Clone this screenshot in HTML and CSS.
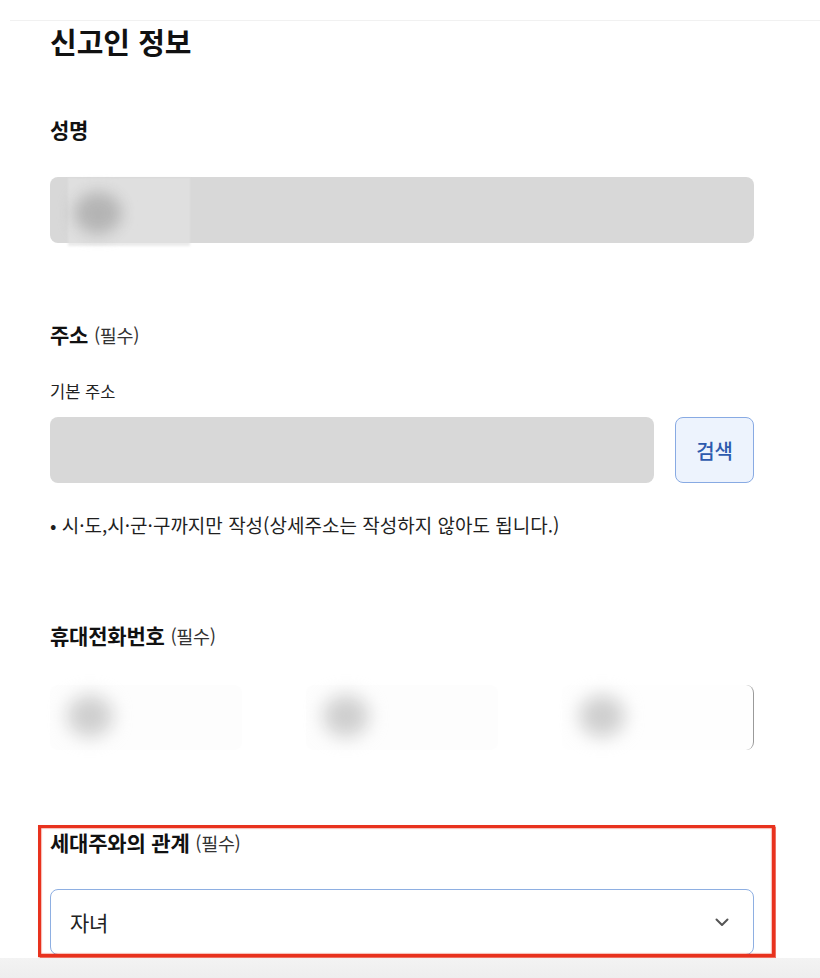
FILE: index.html
```html
<!DOCTYPE html>
<html lang="ko">
<head>
<meta charset="utf-8">
<title>신고인 정보</title>
<link rel="stylesheet" href="styles.css">
</head>
<body>
<div class="topbar"></div>
<main class="form">
  <h1 class="title">신고인 정보</h1>

  <section class="field field-name">
    <div class="label">성명</div>
    <div class="input input-gray input-name">
      <div class="mask"><div class="blob"></div></div>
    </div>
  </section>

  <section class="field field-addr">
    <div class="label">주소 <span class="req">(필수)</span></div>
    <div class="sublabel">기본 주소</div>
    <div class="addr-row">
      <div class="input input-gray addr-input"></div>
      <button class="search-btn" type="button">검색</button>
    </div>
    <p class="note">• 시·도,시·군·구까지만 작성(상세주소는 작성하지 않아도 됩니다.)</p>
  </section>

  <section class="field field-phone">
    <div class="label">휴대전화번호 <span class="req">(필수)</span></div>
    <div class="phone-row">
      <div class="phone-cell"><div class="blob blob-light"></div></div>
      <div class="phone-cell"><div class="blob blob-light"></div></div>
      <div class="phone-cell phone-last"><div class="blob blob-light"></div></div>
    </div>
  </section>

  <section class="field field-rel">
    <div class="label">세대주와의 관계 <span class="req">(필수)</span></div>
    <div class="select">
      <span class="select-value">자녀</span>
      <svg class="chevron" width="14" height="9" viewBox="0 0 14 9" aria-hidden="true">
        <path d="M1.5 1.5 L7 7 L12.5 1.5" fill="none" stroke="#555" stroke-width="2" stroke-linecap="round" stroke-linejoin="round"/>
      </svg>
    </div>
    <div class="highlight"></div>
  </section>
</main>
<div class="bottom-band"></div>
</body>
</html>
```

FILE: styles.css
```css
* { box-sizing: border-box; }

html, body {
  margin: 0;
  padding: 0;
  background: #ffffff;
}

body {
  font-family: "Noto Sans CJK KR", "Noto Sans", sans-serif;
  color: #1a1a1a;
  width: 820px;
  height: 978px;
  overflow: hidden;
}

.topbar {
  height: 21px;
  margin-left: 10px;
  border-bottom: 1px solid #f1f1f1;
}

.form {
  width: 704px;
  margin-left: 50px;
}

.title {
  margin: 0;
  font-size: 29px;
  line-height: 40px;
  font-weight: 700;
  color: #111;
  letter-spacing: 0;
}

.label {
  font-size: 21px;
  line-height: 28px;
  font-weight: 700;
  color: #111;
  letter-spacing: -0.2px;
}

.req {
  font-size: 18.5px;
  font-weight: 400;
  color: #333;
  letter-spacing: -0.3px;
}

.field-name { margin-top: 54px; }
.field-name .input { margin-top: 34px; }

.input {
  height: 66px;
  border-radius: 8px;
}

.input-gray {
  background: #d8d8d8;
}

.input-name {
  position: relative;
}

.input-name .mask {
  position: absolute;
  left: 18px;
  top: 1px;
  width: 122px;
  height: 68px;
  background: rgba(226, 226, 226, 0.7);
  filter: blur(1px);
}

.blob {
  position: absolute;
  left: 6px;
  top: 14px;
  width: 48px;
  height: 42px;
  border-radius: 50%;
  background: #b4b4b4;
  filter: blur(8px);
}

.field-addr { margin-top: 77px; }

.sublabel {
  margin-top: 31px;
  font-size: 16.5px;
  line-height: 22px;
  color: #222;
  letter-spacing: 0;
}

.addr-row {
  margin-top: 15px;
  display: flex;
  gap: 21px;
}

.addr-input {
  flex: 1;
}

.search-btn {
  width: 79px;
  height: 66px;
  border: 1px solid #88aae3;
  border-radius: 8px;
  background: #edf3fd;
  color: #2d5aad;
  font-family: inherit;
  font-size: 20px;
  font-weight: 500;
  padding: 0;
  letter-spacing: -0.2px;
}

.note {
  margin: 30px 0 0;
  font-size: 19px;
  line-height: 24px;
  color: #1f1f1f;
  letter-spacing: 0;
}

.field-phone { margin-top: 84px; }

.phone-row {
  margin-top: 35px;
  height: 65px;
  display: grid;
  grid-template-columns: 192px 192px 192px;
  column-gap: 64px;
}

.phone-cell {
  position: relative;
  background: #fdfdfd;
  border-radius: 8px;
}

.phone-last {
  border-right: 1px solid #9a9a9a;
  background: #fefefe;
}

.blob-light {
  left: 17px;
  top: 10px;
  width: 46px;
  height: 42px;
  background: #cfcfcf;
  filter: blur(9px);
}

.field-rel {
  margin-top: 78px;
  position: relative;
}

.select {
  margin-top: 32px;
  height: 66px;
  border: 1px solid #8eafe2;
  border-radius: 8px;
  background: #fff;
  display: flex;
  align-items: center;
  justify-content: space-between;
  padding: 0 24px 0 19px;
}

.select-value {
  font-size: 21px;
  color: #222;
  letter-spacing: -0.2px;
}

.chevron {
  display: block;
}

.highlight {
  position: absolute;
  left: -12px;
  right: -21px;
  top: -3px;
  bottom: -2px;
  border: 3px solid #e8321e;
  box-shadow: 0 0 1px 0.5px rgba(232, 50, 30, 0.7), inset 0 0 1px 0.5px rgba(232, 50, 30, 0.6);
  pointer-events: none;
}

.bottom-band {
  margin-top: 3px;
  height: 20px;
  background: linear-gradient(#f3f3f3, #eeeeee);
}
```
